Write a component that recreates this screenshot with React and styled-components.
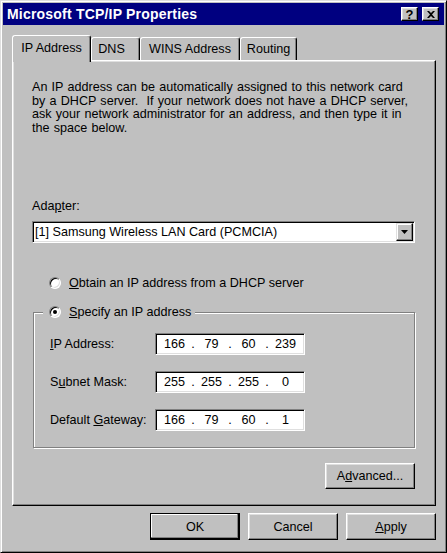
import React from "react";
import styled, { createGlobalStyle } from "styled-components";

const GlobalStyle = createGlobalStyle`
  html, body {
    margin: 0;
    padding: 0;
    background: #c0c0c0;
  }
  body {
    font-family: "Liberation Sans", Arial, sans-serif;
    font-size: 12.6px;
    color: #000;
  }
  * {
    box-sizing: border-box;
  }
`;

const Window = styled.div`
  width: 447px;
  height: 553px;
  background: #c0c0c0;
  border: 1px solid;
  border-color: #dfdfdf #000 #000 #dfdfdf;
  box-shadow: inset 1px 1px 0 #fff, inset -1px -1px 0 #808080;
  padding: 2px;
  display: flex;
  flex-direction: column;
`;

const TitleBar = styled.div`
  height: 22px;
  background: #000080;
  display: flex;
  align-items: center;
  padding: 0 5px 0 4px;
`;

const Title = styled.div`
  flex: 1;
  color: #fff;
  font-weight: bold;
  font-size: 14px;
  letter-spacing: 0.2px;
`;

const CaptionButton = styled.div`
  width: 17px;
  height: 14px;
  margin-left: ${(p) => (p.$gap ? "4px" : "0")};
  background: #c0c0c0;
  border: 1px solid;
  border-color: #fff #000 #000 #fff;
  box-shadow: inset -1px -1px 0 #808080, inset 1px 1px 0 #dfdfdf;
  display: flex;
  align-items: center;
  justify-content: center;
  font-weight: bold;
  font-size: 13px;
  line-height: 1;
`;

const Body = styled.div`
  flex: 1;
  padding: 10px 8px 0 9px;
  display: flex;
  flex-direction: column;
`;

const TabStrip = styled.div`
  height: 25px;
  display: flex;
  align-items: flex-end;
`;

const Tab = styled.div`
  position: relative;
  width: ${(p) => p.$width};
  height: ${(p) => (p.$active ? "27px" : "23px")};
  margin-bottom: ${(p) => (p.$active ? "-2px" : "0")};
  z-index: ${(p) => (p.$active ? 1 : 0)};
  padding-top: ${(p) => (p.$active ? "5px" : "4px")};
  padding-right: ${(p) => p.$trail || "0"};
  text-align: center;
  background: #c0c0c0;
  border: 1px solid;
  border-bottom: none;
  border-color: #fff #000 transparent #fff;
  border-radius: 3px 3px 0 0;
  box-shadow: inset -1px 0 0 #808080;
  white-space: nowrap;
`;

const TabPanel = styled.div`
  height: 446px;
  border: 1px solid;
  border-color: #fff #000 #000 #fff;
  box-shadow: inset -1px -1px 0 #808080, inset 1px 1px 0 #dfdfdf;
  padding: 20px 20px 0 19px;
  display: flex;
  flex-direction: column;
`;

const Intro = styled.p`
  margin: 0;
  word-spacing: 0.7px;
  line-height: 13.5px;
`;

const FieldLabel = styled.div`
  margin-top: 65px;
  line-height: 13px;
`;

const Sunken = styled.div`
  height: 22px;
  background: #fff;
  border: 1px solid;
  border-color: #808080 #fff #fff #808080;
  box-shadow: inset 1px 1px 0 #000, inset -1px -1px 0 #dfdfdf;
  display: flex;
  align-items: center;
`;

const Select = styled(Sunken)`
  margin-top: 8px;
  padding: 1px 1px 1px 2px;
`;

const SelectText = styled.div`
  flex: 1;
`;

const ArrowButton = styled.div`
  width: 17px;
  height: 18px;
  background: #c0c0c0;
  border: 1px solid;
  border-color: #dfdfdf #000 #000 #dfdfdf;
  box-shadow: inset -1px -1px 0 #808080, inset 1px 1px 0 #fff;
  display: flex;
  align-items: center;
  justify-content: center;
`;

const RadioRow = styled.label`
  display: flex;
  align-items: center;
  height: 16px;
  margin-top: ${(p) => p.$top || "0"};
  padding-left: ${(p) => p.$indent || "0"};
`;

const RadioDot = styled.span`
  position: relative;
  width: 12px;
  height: 12px;
  border-radius: 50%;
  background: #fff;
  border: 1px solid;
  border-color: #808080 #fff #fff #808080;
  box-shadow: inset 1px 1px 0 #000, inset -1px -1px 0 #dfdfdf;
  margin-right: 8px;
  flex: none;

  &::after {
    content: "";
    display: ${(p) => (p.$checked ? "block" : "none")};
    position: absolute;
    left: 3px;
    top: 3px;
    width: 4px;
    height: 4px;
    border-radius: 50%;
    background: #000;
  }
`;

const Group = styled.fieldset`
  margin: 13px 0 0 1px;
  padding: 0 0 0 9px;
  border: 1px solid #808080;
  box-shadow: inset 1px 1px 0 #fff, 1px 1px 0 #fff;
  min-width: 0;
`;

const GroupLegend = styled.legend`
  padding: 0 4px 0 6px;
  background: #c0c0c0;
  position: relative;
`;

const AddressGrid = styled.div`
  display: grid;
  grid-template-columns: 105px 150px;
  row-gap: 16px;
  align-items: center;
  padding: 13px 0 16px 7px;
`;

const IpField = styled(Sunken)`
  padding-left: 4px;
`;

const Octet = styled.span`
  width: 29px;
  text-align: center;
`;

const Dot = styled.span`
  width: 8px;
  text-align: center;
`;

const PanelFooter = styled.div`
  display: flex;
  justify-content: flex-end;
  margin-top: 15px;
`;

const Button = styled.div`
  width: 90px;
  height: ${(p) => p.$h || "27px"};
  background: #c0c0c0;
  border: 1px solid;
  border-color: ${(p) => (p.$default ? "#000" : "#fff #000 #000 #fff")};
  box-shadow: ${(p) =>
    p.$default
      ? "inset -1px -1px 0 #000, inset -2px -2px 0 #808080, inset 1px 1px 0 #fff"
      : "inset -1px -1px 0 #808080, inset 1px 1px 0 #dfdfdf"};
  display: flex;
  align-items: center;
  justify-content: center;
`;

const ButtonRow = styled.div`
  display: flex;
  justify-content: flex-end;
  gap: 8px;
  margin-top: 7px;
`;

function IpAddress({ parts }) {
  return (
    <IpField>
      {parts.map((part, i) => (
        <React.Fragment key={i}>
          {i > 0 && <Dot>.</Dot>}
          <Octet>{part}</Octet>
        </React.Fragment>
      ))}
    </IpField>
  );
}

export default function App() {
  return (
    <>
      <GlobalStyle />
      <Window>
        <TitleBar>
          <Title>Microsoft TCP/IP Properties</Title>
          <CaptionButton>?</CaptionButton>
          <CaptionButton $gap>
            <svg width="8" height="7" viewBox="0 0 8 7">
              <path d="M0 0h2l2 2 2-2h2L5 3.5 8 7H6L4 5 2 7H0l3-3.5z" fill="#000" />
            </svg>
          </CaptionButton>
        </TitleBar>
        <Body>
          <TabStrip>
            <Tab $active $width="79px">IP Address</Tab>
            <Tab $width="49px" $trail="8px">DNS</Tab>
            <Tab $width="100px">WINS Address</Tab>
            <Tab $width="57px">Routing</Tab>
          </TabStrip>
          <TabPanel>
            <Intro>
              An IP address can be automatically assigned to this network card
              <br />
              by a DHCP server.&nbsp; If your network does not have a DHCP server,
              <br />
              ask your network administrator for an address, and then type it in
              <br />
              the space below.
            </Intro>
            <FieldLabel>
              Ada<u>p</u>ter:
            </FieldLabel>
            <Select>
              <SelectText>[1] Samsung Wireless LAN Card (PCMCIA)</SelectText>
              <ArrowButton>
                <svg width="7" height="4" viewBox="0 0 7 4">
                  <path d="M0 0h7L3.5 4z" fill="#000" />
                </svg>
              </ArrowButton>
            </Select>
            <RadioRow $top="32px" $indent="17px">
              <RadioDot />
              <span>
                <u>O</u>btain an IP address from a DHCP server
              </span>
            </RadioRow>
            <Group>
              <GroupLegend>
                <RadioRow>
                  <RadioDot $checked />
                  <span>
                    <u>S</u>pecify an IP address
                  </span>
                </RadioRow>
              </GroupLegend>
              <AddressGrid>
                <span>
                  <u>I</u>P Address:
                </span>
                <IpAddress parts={["166", "79", "60", "239"]} />
                <span>
                  S<u>u</u>bnet Mask:
                </span>
                <IpAddress parts={["255", "255", "255", "0"]} />
                <span>
                  Default <u>G</u>ateway:
                </span>
                <IpAddress parts={["166", "79", "60", "1"]} />
              </AddressGrid>
            </Group>
            <PanelFooter>
              <Button $h="26px">
                <span>
                  A<u>d</u>vanced...
                </span>
              </Button>
            </PanelFooter>
          </TabPanel>
          <ButtonRow>
            <Button $default>OK</Button>
            <Button>Cancel</Button>
            <Button>
              <span>
                <u>A</u>pply
              </span>
            </Button>
          </ButtonRow>
        </Body>
      </Window>
    </>
  );
}
